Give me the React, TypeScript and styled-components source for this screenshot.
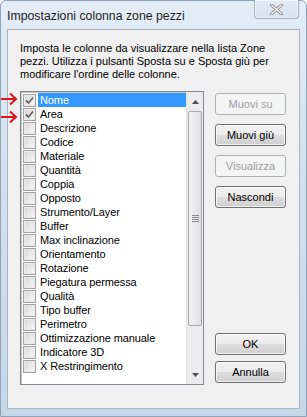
import styled, { createGlobalStyle } from 'styled-components';

const GlobalStyle = createGlobalStyle`
	html, body {
		margin: 0;
		padding: 0;
		overflow: hidden;
		background: #ffffff;
	}
	* {
		box-sizing: border-box;
	}
`;

const columns = [
	{ label: 'Nome', checked: true },
	{ label: 'Area', checked: true },
	{ label: 'Descrizione', checked: false },
	{ label: 'Codice', checked: false },
	{ label: 'Materiale', checked: false },
	{ label: 'Quantità', checked: false },
	{ label: 'Coppia', checked: false },
	{ label: 'Opposto', checked: false },
	{ label: 'Strumento/Layer', checked: false },
	{ label: 'Buffer', checked: false },
	{ label: 'Max inclinazione', checked: false },
	{ label: 'Orientamento', checked: false },
	{ label: 'Rotazione', checked: false },
	{ label: 'Piegatura permessa', checked: false },
	{ label: 'Qualità', checked: false },
	{ label: 'Tipo buffer', checked: false },
	{ label: 'Perimetro', checked: false },
	{ label: 'Ottimizzazione manuale', checked: false },
	{ label: 'Indicatore 3D', checked: false },
	{ label: 'X Restringimento', checked: false },
];

const Window = styled.div`
	position: relative;
	width: 307px;
	height: 417px;
	display: flex;
	flex-direction: column;
	border: 1px solid #8ea3b8;
	border-radius: 6px 6px 0 0;
	background: linear-gradient(180deg, #e4edf6 0%, #d3e1ee 40%, #c6d7e7 100%);
	font-family: 'Liberation Sans', Arial, sans-serif;
	color: #000;
`;

const TitleBar = styled.div`
	height: 28px;
	display: flex;
	align-items: flex-start;
	justify-content: space-between;
	padding-left: 6px;
`;

const Title = styled.div`
	margin-top: 8px;
	font-size: 12.3px;
	color: #1e1e1e;
`;

const CloseButton = styled.div`
	width: 45px;
	height: 19px;
	margin-right: 7px;
	margin-top: -1px;
	display: flex;
	align-items: center;
	justify-content: center;
	border: 1px solid #9fb1c3;
	border-top: none;
	border-radius: 0 0 4px 4px;
	background: linear-gradient(180deg, #e3ecf5 0%, #d6e3ef 100%);
	box-shadow: inset 0 0 0 1px rgba(255, 255, 255, 0.6);
`;

const Client = styled.div`
	flex: 1;
	margin: 0 6px 7px 6px;
	border: 1px solid #a9b7c6;
	background: #f0f0f0;
	padding: 12px 12px 0 12px;
	display: flex;
	flex-direction: column;
`;

const Description = styled.p`
	margin: 0 0 10px 0;
	font-size: 11px;
	line-height: 13px;
	width: 250px;
`;

const Body = styled.div`
	display: flex;
	gap: 11px;
`;

const ListBox = styled.div`
	width: 184px;
	height: 294px;
	border: 1px solid #828790;
	background: #fff;
	display: flex;
	box-shadow: inset 1px 1px 0 #c4c4c4;
`;

const Rows = styled.div`
	flex: 1;
	padding: 1px 0 0 2px;
`;

const Row = styled.div`
	height: 14px;
	display: flex;
	align-items: center;
`;

const Check = styled.span`
	width: 13px;
	height: 13px;
	flex: none;
	display: flex;
	align-items: center;
	justify-content: center;
	border: 1px solid #a3a3a3;
	background: linear-gradient(135deg, #d6d6d6 0%, #ececec 60%, #f7f7f7 100%);
	box-shadow: inset 0 0 0 1px #ebebeb;
`;

const Label = styled.span<{ $selected: boolean }>`
	flex: 1;
	height: 14px;
	margin-left: 2px;
	padding-left: 2px;
	font-size: 11px;
	line-height: 14px;
	white-space: nowrap;
	letter-spacing: -0.1px;
	color: ${(props) => (props.$selected ? '#ffffff' : '#000000')};
	background: ${(props) => (props.$selected ? '#3399ff' : 'transparent')};
`;

const ScrollBar = styled.div`
	width: 17px;
	display: flex;
	flex-direction: column;
	background: #ececec;
	border-left: 1px solid #e3e3e3;
	padding: 1px 0;
`;

const ScrollArrow = styled.div`
	height: 17px;
	display: flex;
	align-items: center;
	justify-content: center;
`;

const Track = styled.div`
	flex: 1;
	display: flex;
	flex-direction: column;
	padding: 1px 0 0 0;
`;

const Thumb = styled.div`
	height: 215px;
	margin: 0 1px;
	border: 1px solid #a8a8a8;
	border-radius: 2px;
	background: linear-gradient(90deg, #f5f5f5 0%, #eaeaea 50%, #dedede 100%);
	display: flex;
	flex-direction: column;
	align-items: center;
	justify-content: center;
	gap: 1px;
`;

const Grip = styled.span`
	width: 7px;
	height: 1px;
	background: #8a8a8a;
`;

const ButtonColumn = styled.div`
	display: flex;
	flex-direction: column;
	justify-content: space-between;
	padding: 2px 0;
`;

const ButtonGroup = styled.div<{ $gap: number }>`
	display: flex;
	flex-direction: column;
	gap: ${(props) => props.$gap}px;
`;

const Button = styled.div<{ $disabled?: boolean }>`
	width: 71px;
	height: 22px;
	display: flex;
	align-items: center;
	justify-content: center;
	font-size: 11px;
	border-radius: 3px;
	border: 1px solid ${(props) => (props.$disabled ? '#adb2b5' : '#707070')};
	color: ${(props) => (props.$disabled ? '#a0a0a0' : '#000000')};
	background: ${(props) =>
		props.$disabled
			? '#f4f4f4'
			: 'linear-gradient(180deg, #f2f2f2 0%, #ebebeb 48%, #dddddd 52%, #cfcfcf 100%)'};
	box-shadow: inset 0 0 0 1px ${(props) => (props.$disabled ? '#f4f4f4' : 'rgba(255,255,255,0.7)')};
`;

const Arrow = styled.svg<{ $top: number }>`
	position: absolute;
	left: 0;
	top: ${(props) => props.$top}px;
`;

const CheckMark = () => (
	<svg width="9" height="9" viewBox="0 0 9 9">
		<path d="M1 4.5 L3.5 7 L8 1.5" fill="none" stroke="#666" strokeWidth="1.8" />
	</svg>
);

const RedArrow = ({ top }: { top: number }) => (
	<Arrow $top={top} width="20" height="14" viewBox="0 0 20 14">
		<path d="M0 7 H15" stroke="#e0141b" strokeWidth="2" />
		<path d="M9 1.5 L15 7 L9 12.5" fill="none" stroke="#e0141b" strokeWidth="2" />
	</Arrow>
);

const App = () => {
	return (
		<>
			<GlobalStyle />
			<Window>
				<TitleBar>
					<Title>Impostazioni colonna zone pezzi</Title>
					<CloseButton>
						<svg width="13" height="11" viewBox="0 0 13 11">
							<path
								d="M1.5 1 L11.5 10 M11.5 1 L1.5 10"
								stroke="#8a8a8a"
								strokeWidth="3"
								strokeLinecap="round"
							/>
							<path
								d="M1.5 1 L11.5 10 M11.5 1 L1.5 10"
								stroke="#f4f4f4"
								strokeWidth="1.2"
								strokeLinecap="round"
							/>
						</svg>
					</CloseButton>
				</TitleBar>
				<Client>
					<Description>
						Imposta le colonne da visualizzare nella lista Zone pezzi. Utilizza i pulsanti Sposta su e
						Sposta giù per modificare l'ordine delle colonne.
					</Description>
					<Body>
						<ListBox>
							<Rows>
								{columns.map((col, i) => (
									<Row key={col.label}>
										<Check>{col.checked && <CheckMark />}</Check>
										<Label $selected={i === 0}>{col.label}</Label>
									</Row>
								))}
							</Rows>
							<ScrollBar>
								<ScrollArrow>
									<svg width="7" height="4" viewBox="0 0 7 4">
										<path d="M0 4 L3.5 0 L7 4 Z" fill="#4d4d4d" />
									</svg>
								</ScrollArrow>
								<Track>
									<Thumb>
										<Grip />
										<Grip />
										<Grip />
										<Grip />
									</Thumb>
								</Track>
								<ScrollArrow>
									<svg width="7" height="4" viewBox="0 0 7 4">
										<path d="M0 0 L7 0 L3.5 4 Z" fill="#4d4d4d" />
									</svg>
								</ScrollArrow>
							</ScrollBar>
						</ListBox>
						<ButtonColumn>
							<ButtonGroup $gap={9}>
								<Button $disabled>Muovi su</Button>
								<Button>Muovi giù</Button>
								<Button $disabled>Visualizza</Button>
								<Button>Nascondi</Button>
							</ButtonGroup>
							<ButtonGroup $gap={6}>
								<Button>OK</Button>
								<Button>Annulla</Button>
							</ButtonGroup>
						</ButtonColumn>
					</Body>
				</Client>
				<RedArrow top={91} />
				<RedArrow top={109} />
			</Window>
		</>
	);
};

export default App;
